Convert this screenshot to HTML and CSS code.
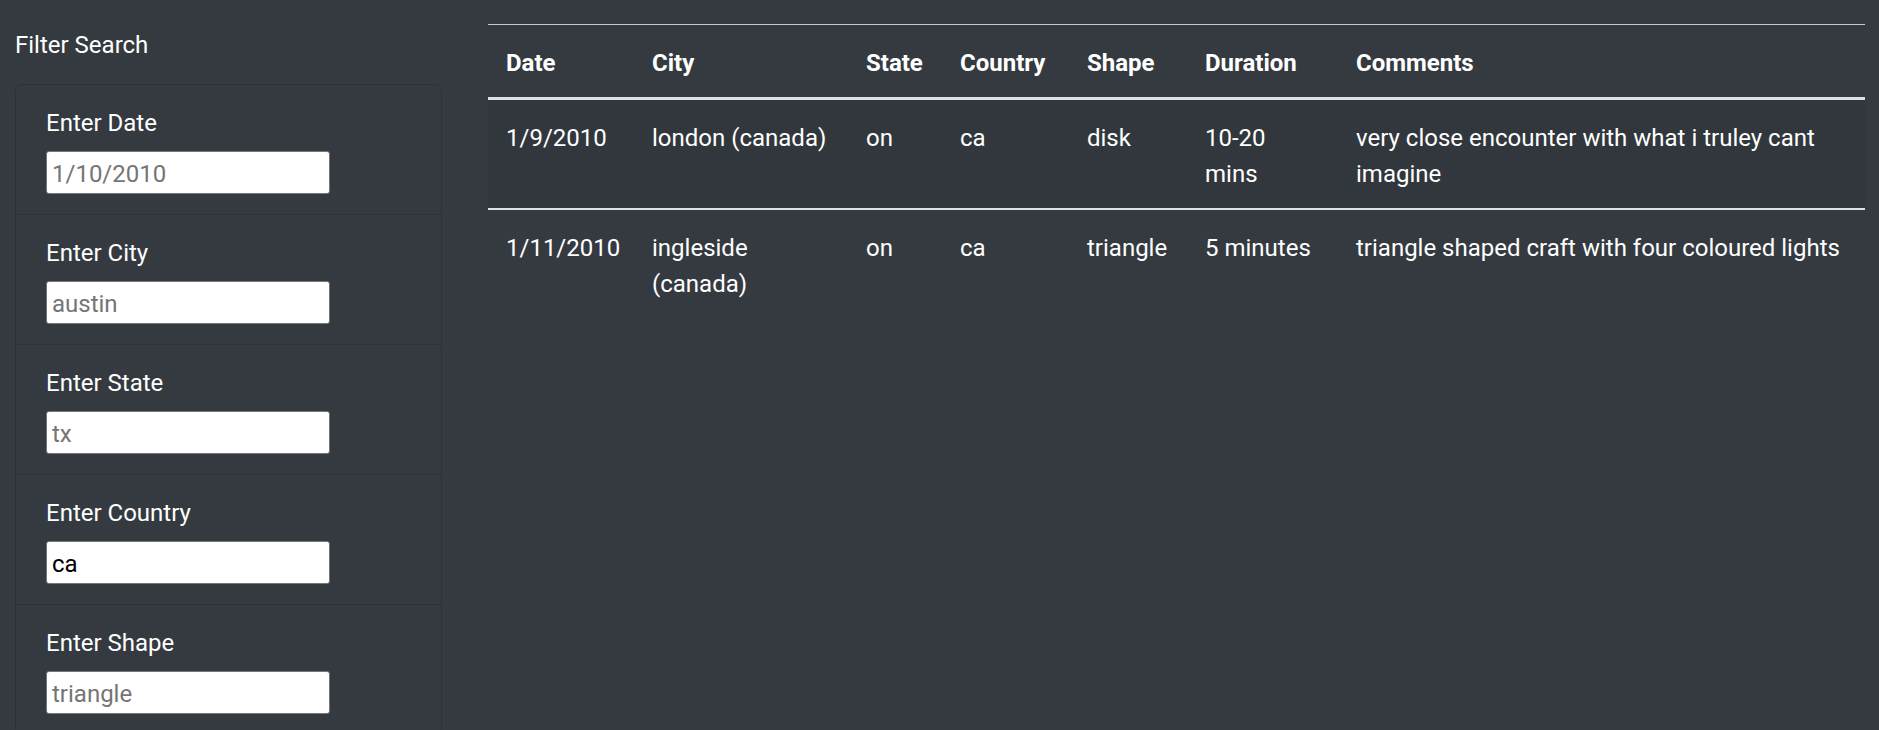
FILE: index.html
```html
<!DOCTYPE html>
<html lang="en">
<head>
<meta charset="utf-8">
<title>UFO Sightings</title>
<link rel="stylesheet" href="styles.css">
</head>
<body>
<div class="page">
  <aside class="sidebar">
    <p class="title">Filter Search</p>
    <ul class="filters">
      <li class="filter">
        <label class="filter-label" for="datetime">Enter Date</label>
        <input class="filter-input" id="datetime" type="text" placeholder="1/10/2010">
      </li>
      <li class="filter">
        <label class="filter-label" for="city">Enter City</label>
        <input class="filter-input" id="city" type="text" placeholder="austin">
      </li>
      <li class="filter">
        <label class="filter-label" for="state">Enter State</label>
        <input class="filter-input" id="state" type="text" placeholder="tx">
      </li>
      <li class="filter">
        <label class="filter-label" for="country">Enter Country</label>
        <input class="filter-input" id="country" type="text" placeholder="ca" value="ca">
      </li>
      <li class="filter">
        <label class="filter-label" for="shape">Enter Shape</label>
        <input class="filter-input" id="shape" type="text" placeholder="triangle">
      </li>
    </ul>
  </aside>
  <main class="results">
    <table class="ufo-table">
      <colgroup>
        <col class="c-date">
        <col class="c-city">
        <col class="c-state">
        <col class="c-country">
        <col class="c-shape">
        <col class="c-duration">
        <col class="c-comments">
      </colgroup>
      <thead>
        <tr>
          <th>Date</th>
          <th>City</th>
          <th>State</th>
          <th>Country</th>
          <th>Shape</th>
          <th>Duration</th>
          <th>Comments</th>
        </tr>
      </thead>
      <tbody>
        <tr>
          <td>1/9/2010</td>
          <td>london (canada)</td>
          <td>on</td>
          <td>ca</td>
          <td>disk</td>
          <td>10-20 mins</td>
          <td>very close encounter with what i truley cant imagine</td>
        </tr>
        <tr>
          <td>1/11/2010</td>
          <td>ingleside (canada)</td>
          <td>on</td>
          <td>ca</td>
          <td>triangle</td>
          <td>5 minutes</td>
          <td>triangle shaped craft with four coloured lights</td>
        </tr>
      </tbody>
    </table>
  </main>
</div>
</body>
</html>
```
FILE: styles.css
```css
* {
  box-sizing: border-box;
}

html, body {
  margin: 0;
  padding: 0;
}

body {
  background: #343a40;
  color: #ffffff;
  font-family: "Segoe UI", Roboto, "Liberation Sans", sans-serif;
  font-size: 24px;
  line-height: 36px;
  overflow: hidden;
}

.page {
  display: flex;
  align-items: flex-start;
  gap: 46px;
  padding: 24px 14px 0 15px;
}

.sidebar {
  flex: 0 0 427px;
  width: 427px;
}

.title {
  margin: 0 0 21px;
  padding-top: 3px;
}

.filters {
  list-style: none;
  margin: 0;
  padding: 0;
  border: 1px solid rgba(0, 0, 0, 0.125);
  border-radius: 6px;
}

.filter {
  padding: 18px 30px 20px;
}

.filter + .filter {
  border-top: 1px solid rgba(0, 0, 0, 0.125);
}

.filter-label {
  display: block;
  padding-top: 2px;
  margin-bottom: 10px;
}

.filter-input {
  display: block;
  width: 284px;
  height: 43px;
  margin: 0;
  padding: 3px 5px 0;
  border: 1px solid #767676;
  border-radius: 3px;
  background: #ffffff;
  color: #000000;
  font: inherit;
  line-height: 36px;
}

.filter-input::placeholder {
  color: #757575;
  opacity: 1;
}

.results {
  flex: 1 1 auto;
  min-width: 0;
}

.ufo-table {
  width: 100%;
  table-layout: fixed;
  border-collapse: separate;
  border-spacing: 0;
}

.c-date { width: 146px; }
.c-city { width: 214px; }
.c-state { width: 94px; }
.c-country { width: 127px; }
.c-shape { width: 118px; }
.c-duration { width: 151px; }

.ufo-table th,
.ufo-table td {
  padding: 20px 18px 16px;
  text-align: left;
  vertical-align: top;
}

.ufo-table th:last-child,
.ufo-table td:last-child {
  padding-right: 4px;
}

.ufo-table th {
  font-weight: 700;
  vertical-align: bottom;
  border-top: 1px solid #c6c9cc;
  border-bottom: 3px solid #dee2e6;
}

.ufo-table tbody tr + tr td {
  border-top: 2px solid #dee2e6;
}

.ufo-table tbody tr:nth-child(odd) td {
  background: rgba(0, 0, 0, 0.05);
}
```
